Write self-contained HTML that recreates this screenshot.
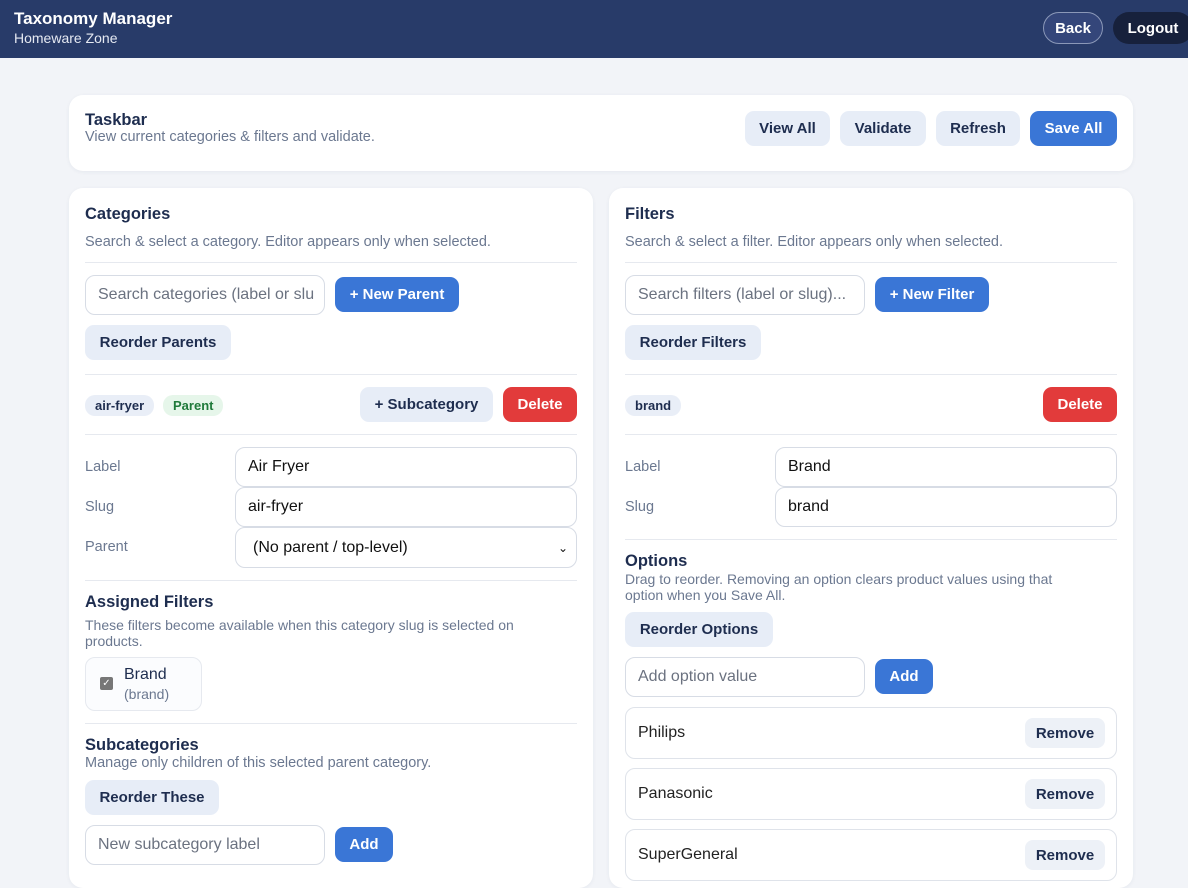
<!DOCTYPE html><html><head><style>
*{box-sizing:border-box;margin:0;padding:0}
body{width:1188px;height:875px;overflow:hidden;background:#f2f4f8;font-family:"Liberation Sans",Arial,sans-serif;position:relative;color:#1e2d4f}
.a{position:absolute}
.hdr{left:0;top:0;width:1188px;height:58px;background:#283b69}
.card{background:#fff;border-radius:14px;box-shadow:0 1px 4px rgba(30,45,80,.06)}
.t{font-weight:bold;font-size:16.5px;color:#1e2d4f}
.s{font-size:14.5px;color:#6b7890}
.btn{border-radius:9px;font-weight:bold;font-size:15px;display:flex;align-items:center;justify-content:center}
.lt{background:#e7edf7;color:#1e2d4f}
.bl{background:#3a76d6;color:#fff}
.rd{background:#e23b3b;color:#fff}
.inp{border:1px solid #d7dce5;border-radius:10px;background:#fff;font-size:16px;color:#6b7280;display:flex;align-items:center;padding-left:12px}
.val{color:#111}
.hr{height:1px;background:#e6e9ef}
.lab{font-size:14.5px;color:#6b7890}
.pill{border-radius:10px;font-size:13px;font-weight:bold;padding:3px 10px;background:#e9eef7;color:#1e2d4f}
.opt{border:1px solid #dfe3ea;border-radius:10px;background:#fff;font-size:16px;color:#222;display:flex;align-items:center;padding-left:12px}
.rm{position:absolute;right:11px;top:10px;width:80px;height:30px;background:#edf1f7;border-radius:8px;font-weight:bold;font-size:15px;display:flex;align-items:center;justify-content:center;color:#1e2d4f}
</style></head><body>
<div class="a hdr"></div>
<div class="a" style="left:14px;top:9px;color:#fff;font-weight:bold;font-size:17px">Taxonomy Manager</div>
<div class="a" style="left:14px;top:30px;color:#e5e9f2;font-size:14px">Homeware Zone</div>
<div class="a btn" style="left:1043px;top:12px;width:60px;height:32px;border:1px solid #8b98b8;border-radius:16px;background:#34467a;color:#fff">Back</div>
<div class="a btn" style="left:1113px;top:12px;width:80px;height:32px;border-radius:16px;background:#17213c;color:#fff">Logout</div>

<div class="a card" style="left:69px;top:95px;width:1064px;height:76px"></div>
<div class="a t" style="left:85px;top:111px">Taskbar</div>
<div class="a s" style="left:85px;top:129px">View current categories &amp; filters and validate.</div>
<div class="a btn lt" style="left:745px;top:111px;width:85px;height:35px">View All</div>
<div class="a btn lt" style="left:840px;top:111px;width:86px;height:35px">Validate</div>
<div class="a btn lt" style="left:936px;top:111px;width:84px;height:35px">Refresh</div>
<div class="a btn bl" style="left:1030px;top:111px;width:87px;height:35px">Save All</div>

<div class="a card" style="left:69px;top:188px;width:524px;height:700px"></div>
<div class="a card" style="left:609px;top:188px;width:524px;height:700px"></div>

<!-- left -->
<div class="a t" style="left:85px;top:205px">Categories</div>
<div class="a s" style="left:85px;top:234px">Search &amp; select a category. Editor appears only when selected.</div>
<div class="a hr" style="left:85px;top:262px;width:492px"></div>
<div class="a inp" style="left:85px;top:275px;width:240px;height:40px">Search categories (label or slu</div>
<div class="a btn bl" style="left:335px;top:277px;width:124px;height:35px">+ New Parent</div>
<div class="a btn lt" style="left:85px;top:325px;width:146px;height:35px">Reorder Parents</div>
<div class="a hr" style="left:85px;top:374px;width:492px"></div>
<div class="a pill" style="left:85px;top:395px">air-fryer</div>
<div class="a pill" style="left:163px;top:395px;background:#e6f6ea;color:#1f7a3a">Parent</div>
<div class="a btn lt" style="left:360px;top:387px;width:133px;height:35px">+ Subcategory</div>
<div class="a btn rd" style="left:503px;top:387px;width:74px;height:35px">Delete</div>
<div class="a hr" style="left:85px;top:434px;width:492px"></div>
<div class="a lab" style="left:85px;top:459px">Label</div>
<div class="a inp val" style="left:235px;top:447px;width:342px;height:40px">Air Fryer</div>
<div class="a lab" style="left:85px;top:499px">Slug</div>
<div class="a inp val" style="left:235px;top:487px;width:342px;height:40px">air-fryer</div>
<div class="a lab" style="left:85px;top:539px">Parent</div>
<div class="a inp val" style="left:235px;top:527px;width:342px;height:41px;padding-left:17px">(No parent / top-level)<span style="position:absolute;right:8px;font-size:12px">&#8964;</span></div>
<div class="a hr" style="left:85px;top:580px;width:492px"></div>
<div class="a t" style="left:85px;top:593px">Assigned Filters</div>
<div class="a s" style="left:85px;top:617px;width:458px;font-size:14px;line-height:16px">These filters become available when this category slug is selected on products.</div>
<div class="a" style="left:85px;top:657px;width:117px;height:54px;border:1px solid #e6e9ef;border-radius:10px;background:#fbfcfe"></div>
<div class="a" style="left:100px;top:677px;width:13px;height:13px;background:#777;border-radius:2px;color:#fff;font-size:10px;text-align:center;line-height:13px">✓</div>
<div class="a" style="left:124px;top:666px;font-size:16px;color:#1e2d4f">Brand</div>
<div class="a" style="left:124px;top:686px;font-size:14px;color:#6b7890">(brand)</div>
<div class="a hr" style="left:85px;top:723px;width:492px"></div>
<div class="a t" style="left:85px;top:736px">Subcategories</div>
<div class="a s" style="left:85px;top:755px">Manage only children of this selected parent category.</div>
<div class="a btn lt" style="left:85px;top:780px;width:134px;height:35px">Reorder These</div>
<div class="a inp" style="left:85px;top:825px;width:240px;height:40px">New subcategory label</div>
<div class="a btn bl" style="left:335px;top:827px;width:58px;height:35px">Add</div>

<!-- right -->
<div class="a t" style="left:625px;top:205px">Filters</div>
<div class="a s" style="left:625px;top:234px">Search &amp; select a filter. Editor appears only when selected.</div>
<div class="a hr" style="left:625px;top:262px;width:492px"></div>
<div class="a inp" style="left:625px;top:275px;width:240px;height:40px">Search filters (label or slug)...</div>
<div class="a btn bl" style="left:875px;top:277px;width:114px;height:35px">+ New Filter</div>
<div class="a btn lt" style="left:625px;top:325px;width:136px;height:35px">Reorder Filters</div>
<div class="a hr" style="left:625px;top:374px;width:492px"></div>
<div class="a pill" style="left:625px;top:395px">brand</div>
<div class="a btn rd" style="left:1043px;top:387px;width:74px;height:35px">Delete</div>
<div class="a hr" style="left:625px;top:434px;width:492px"></div>
<div class="a lab" style="left:625px;top:459px">Label</div>
<div class="a inp val" style="left:775px;top:447px;width:342px;height:40px">Brand</div>
<div class="a lab" style="left:625px;top:499px">Slug</div>
<div class="a inp val" style="left:775px;top:487px;width:342px;height:40px">brand</div>
<div class="a hr" style="left:625px;top:539px;width:492px"></div>
<div class="a t" style="left:625px;top:552px">Options</div>
<div class="a s" style="left:625px;top:571px;width:455px;font-size:14px;line-height:16px">Drag to reorder. Removing an option clears product values using that option when you Save All.</div>
<div class="a btn lt" style="left:625px;top:612px;width:148px;height:35px">Reorder Options</div>
<div class="a inp" style="left:625px;top:657px;width:240px;height:40px">Add option value</div>
<div class="a btn bl" style="left:875px;top:659px;width:58px;height:35px">Add</div>
<div class="a opt" style="left:625px;top:707px;width:492px;height:52px">Philips<div class="rm">Remove</div></div>
<div class="a opt" style="left:625px;top:768px;width:492px;height:52px">Panasonic<div class="rm">Remove</div></div>
<div class="a opt" style="left:625px;top:829px;width:492px;height:52px">SuperGeneral<div class="rm">Remove</div></div>
</body></html>
